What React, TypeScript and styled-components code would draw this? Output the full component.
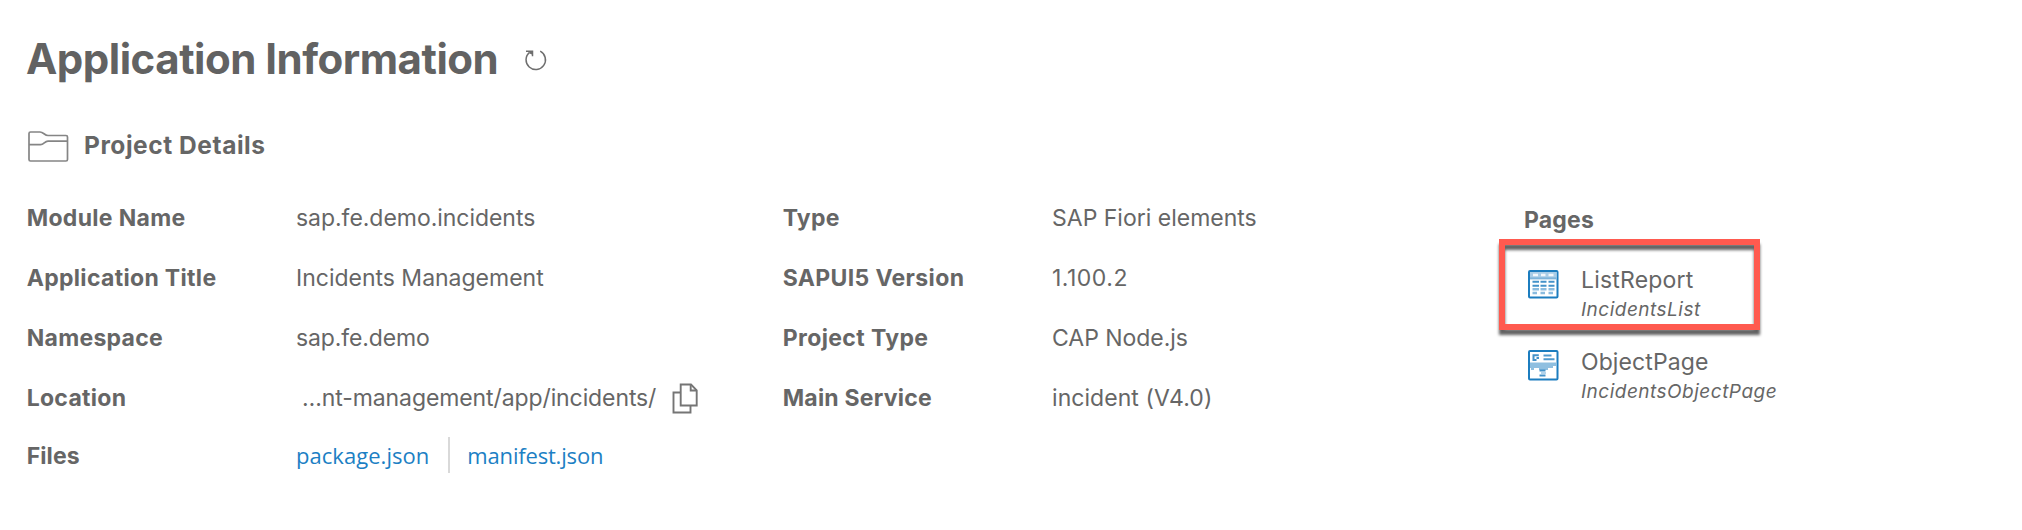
import React from "react";
import styled, { createGlobalStyle } from "styled-components";

const GlobalStyle = createGlobalStyle`
  * { box-sizing: border-box; }
  body {
    margin: 0;
    background: #fff;
    color: #666;
    font-family: Inter, "Liberation Sans", sans-serif;
  }
`;

const Page = styled.main`
  min-height: 530px;
  padding: 29px 26px 0;
  background: #fff;
`;

const Header = styled.header`
  display: flex;
  align-items: center;
  height: 60px;
  gap: 26px;
`;

const Title = styled.h1`
  margin: 0;
  color: #626262;
  font-size: 42px;
  font-weight: 700;
  letter-spacing: -0.49px;
  line-height: 60px;
  white-space: nowrap;
`;

const SectionHeader = styled.div`
  display: flex;
  align-items: center;
  height: 60px;
  margin: 26px 0 13px;
  gap: 14px;
`;

const SectionTitle = styled.h2`
  margin: 0;
  font-size: 24.5px;
  font-weight: 700;
  letter-spacing: 0.55px;
  line-height: 60px;
`;

const Columns = styled.div`
  display: grid;
  grid-template-columns: 756px 742px 1fr;
  align-items: start;
`;

const DetailList = styled.dl`
  display: grid;
  grid-template-columns: 270px 1fr;
  grid-auto-rows: 60px;
  align-items: center;
  margin: 0;
`;

const Label = styled.dt<{ $track?: number }>`
  padding-left: 0.7px;
  font-size: 23px;
  font-weight: 700;
  letter-spacing: ${({ $track = 0.32 }) => $track}px;
  white-space: nowrap;
`;

const Value = styled.dd<{ $track?: number }>`
  display: flex;
  align-items: center;
  margin: 0;
  font-size: 23px;
  letter-spacing: ${({ $track = 0 }) => $track}px;
  white-space: nowrap;
`;

const PathText = styled.span`
  padding: 0 15px 0 6px;
`;

const FileLinks = styled(Value)`
  margin-top: -6px;
  font-family: "Open Sans", "Noto Sans", sans-serif;
  font-size: 22px;
`;

const FilesLabel = styled(Label)`
  margin-top: -4px;
`;

const FileLink = styled.a<{ $track?: number }>`
  color: #1c7fc4;
  letter-spacing: ${({ $track = 0 }) => $track}px;
  text-decoration: none;
`;

const Divider = styled.span`
  width: 2px;
  height: 36px;
  margin: 0 17px 0 19px;
  background: #d9d9d9;
`;

const PagesPanel = styled.section`
  display: flex;
  flex-direction: column;
  padding-top: 12px;
`;

const PagesTitle = styled.h3`
  margin: 0 0 27px;
  font-size: 23px;
  font-weight: 700;
  letter-spacing: 0.2px;
  line-height: 40px;
`;

const PageItem = styled.div`
  position: relative;
  display: flex;
  align-items: flex-start;
  height: 82px;
  gap: 22px;
  padding-left: 4px;
`;

const IconSlot = styled.span<{ $top: number }>`
  display: flex;
  padding-top: ${({ $top }) => $top}px;
`;

const PageName = styled.div<{ $track: number }>`
  padding-top: 1px;
  font-size: 23px;
  line-height: 25px;
  letter-spacing: ${({ $track }) => $track}px;
`;

const PageId = styled.div`
  margin-top: 4px;
  font-size: 19px;
  font-style: italic;
  line-height: 25px;
  letter-spacing: 0.49px;
`;

const Highlight = styled.span`
  position: absolute;
  top: -28px;
  left: -25px;
  width: 261px;
  height: 91px;
  border: 6px solid #ff5a4f;
  filter: drop-shadow(0 5px 1.5px rgba(0, 0, 0, 0.62));
`;

const Svg = styled.svg`
  display: block;
  flex: none;
`;

const RefreshIcon = () => (
  <Svg width="24" height="24" viewBox="0 -1 24 24" fill="none" stroke="#6e6e6e" strokeWidth="1.5">
    <path d="M16.2 3.2A9.7 9.7 0 1 1 5.5 4.4" />
    <path d="M2 3.2h6.5v5" />
    <path d="M5 3.2h3.5v3.6L5.6 5.6z" fill="#6e6e6e" stroke="none" />
  </Svg>
);

const FolderIcon = () => (
  <Svg width="44" height="34" viewBox="0 -0.5 44 34" fill="none" stroke="#858585" strokeWidth="1.7">
    <path d="M4.5 3.5H14c3.5 0 4.500 3.500 8 3.500h18q1.500 0 1.500 1.500V31q0 1.500-1.500 1.500H4.500Q3 32.500 3 31V5q0-1.500 1.500-1.500z" />
    <path d="M3 16.200h11.500c3.500 0 4-3.600 7.500-3.600h19.500" />
  </Svg>
);

const CopyIcon = () => (
  <Svg width="28" height="32" viewBox="-0.5 -1 28 32" fill="none" stroke="#757575" strokeWidth="1.9">
    <path d="M9.200 9.500H2v20h17v-7" />
    <path d="M9.200 1.500h10.300l5.700 5.800V22.500h-16z" />
    <path d="M19.200 1.500v6h6" />
  </Svg>
);

const ListReportIcon = () => (
  <Svg width="31" height="29" viewBox="0 0 31 29">
    <rect x="1" y="1" width="28.500" height="26.500" rx="1" fill="#fff" stroke="#1c7dbf" strokeWidth="2" />
    <path d="M2 2h26.500v6.500H2z" fill="#a9cde7" />
    <path d="M5 5h5M13 5h4.500M20.500 5h5" stroke="#f2f8fc" strokeWidth="2.400" />
    <path d="M2 8.400h26.500" stroke="#7fb4da" strokeWidth="2" />
    <path d="M4.500 11.700h6.500M12.500 11.700h6M20.500 11.700h6M4.500 15.700h6.500M12.500 15.700h6M20.500 15.700h6" stroke="#4492c9" strokeWidth="2" />
    <path d="M4.500 19.300h6.500M12.500 19.300h6M20.500 19.300h6M4.500 23h4.500M12.500 23h4.500M20.500 23h4.500" stroke="#8bbcdf" strokeWidth="2.400" />
  </Svg>
);

const ObjectPageIcon = () => (
  <Svg width="31" height="31" viewBox="0 0 31 31">
    <rect x="1" y="1" width="28.500" height="28.500" rx="1" fill="#fff" stroke="#1c7dbf" strokeWidth="2" />
    <path d="M10.800 5.300H5.500v4.700h3M8.500 8h2.500" fill="none" stroke="#4492c9" strokeWidth="2" />
    <path d="M15.500 5.500h8M15.500 9.300h11" stroke="#4f99cd" strokeWidth="2" />
    <path d="M2 12.500h26.500V16H25v2h-5v2h-9v-2H6v2H3v-2H2z" fill="#8fbfe0" />
    <path d="M11.500 20.500h6M11.500 25.500h6" stroke="#4492c9" strokeWidth="1.900" />
    <path d="M13 23h5" stroke="#b3d3ea" strokeWidth="2" />
  </Svg>
);

const TYPE_DETAILS = [
  { label: "Type", value: "SAP Fiori elements", labelTrack: 0.25, track: 0 },
  { label: "SAPUI5 Version", value: "1.100.2", labelTrack: 0.36, track: 0.5 },
  { label: "Project Type", value: "CAP Node.js", labelTrack: 0.38, track: -0.04 },
  { label: "Main Service", value: "incident (V4.0)", labelTrack: 0.22, track: 0.06 },
];

export default function App() {
  return (
    <Page>
      <GlobalStyle />
      <Header>
        <Title>Application Information</Title>
        <RefreshIcon />
      </Header>
      <SectionHeader>
        <FolderIcon />
        <SectionTitle>Project Details</SectionTitle>
      </SectionHeader>
      <Columns>
        <DetailList>
          <Label>Module Name</Label>
          <Value $track={-0.04}>sap.fe.demo.incidents</Value>
          <Label>Application Title</Label>
          <Value $track={-0.01}>Incidents Management</Value>
          <Label $track={0.28}>Namespace</Label>
          <Value $track={-0.13}>sap.fe.demo</Value>
          <Label $track={0.28}>Location</Label>
          <Value $track={-0.1}>
            <PathText>…nt-management/app/incidents/</PathText>
            <CopyIcon />
          </Value>
          <FilesLabel $track={0.08}>Files</FilesLabel>
          <FileLinks>
            <FileLink $track={0.04}>package.json</FileLink>
            <Divider />
            <FileLink $track={-0.18}>manifest.json</FileLink>
          </FileLinks>
        </DetailList>
        <DetailList>
          {TYPE_DETAILS.map((d) => (
            <React.Fragment key={d.label}>
              <Label $track={d.labelTrack}>{d.label}</Label>
              <Value $track={d.track}>{d.value}</Value>
            </React.Fragment>
          ))}
        </DetailList>
        <PagesPanel>
          <PagesTitle>Pages</PagesTitle>
          <PageItem>
            <IconSlot $top={3}>
              <ListReportIcon />
            </IconSlot>
            <div>
              <PageName $track={0.2}>ListReport</PageName>
              <PageId>IncidentsList</PageId>
            </div>
            <Highlight />
          </PageItem>
          <PageItem>
            <IconSlot $top={1}>
              <ObjectPageIcon />
            </IconSlot>
            <div>
              <PageName $track={0.1}>ObjectPage</PageName>
              <PageId>IncidentsObjectPage</PageId>
            </div>
          </PageItem>
        </PagesPanel>
      </Columns>
    </Page>
  );
}
